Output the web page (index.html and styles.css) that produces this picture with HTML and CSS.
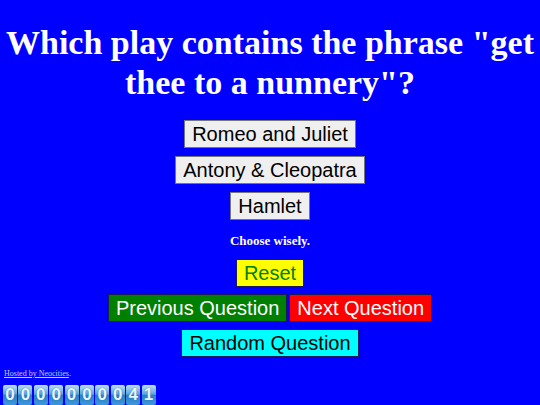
FILE: index.html
```html
<!DOCTYPE html>
<html lang="en">
<head>
  <meta charset="UTF-8">
  <title>Shakespeare Quiz</title>
  <link rel="stylesheet" href="styles.css">
</head>
<body>
<div class="quiz">
  <h1 class="question">Which play contains the phrase "get thee to a nunnery"?</h1>

  <div class="answers">
    <button class="answer">Romeo and Juliet</button>
    <button class="answer">Antony &amp; Cleopatra</button>
    <button class="answer">Hamlet</button>
  </div>

  <p class="feedback">Choose wisely.</p>

  <div class="controls">
    <button class="ctl reset">Reset</button>
    <div class="nav-row">
      <button class="ctl prev">Previous Question</button><button class="ctl next">Next Question</button>
    </div>
    <button class="ctl random">Random Question</button>
  </div>
</div>

<div class="hosted">
  <a href="#">Hosted by Neocities</a>.
  <div class="counter">
    <span class="digit">0</span><span class="digit">0</span><span class="digit">0</span><span class="digit">0</span><span class="digit">0</span><span class="digit">0</span><span class="digit">0</span><span class="digit">0</span><span class="digit">4</span><span class="digit">1</span>
  </div>
</div>
</body>
</html>
```

FILE: styles.css
```css
body {
  margin: 0;
  background-color: blue;
  color: white;
  font-family: "Liberation Serif", "Times New Roman", serif;
  overflow: hidden;
}
.quiz {
  display: flex;
  flex-direction: column;
  align-items: center;
  padding-top: 23px;
}
.question {
  font-size: 34px;
  line-height: 40px;
  text-align: center;
  margin: 0;
}
.answers {
  display: flex;
  flex-direction: column;
  align-items: center;
  gap: 8px;
  margin-top: 17px;
}
button {
  font-family: "Liberation Sans", Arial, sans-serif;
  font-size: 20px;
  line-height: 24px;
  padding: 1px 7px;
  border: 1px solid #1a1a5a;
  border-radius: 0;
  cursor: pointer;
}
.answer {
  background-color: #efefef;
  color: black;
  border-color: #767676;
}
.feedback {
  font-size: 13px;
  font-weight: bold;
  margin: 13px 0 10px;
}
.controls {
  display: flex;
  flex-direction: column;
  align-items: center;
  gap: 7px;
}
.nav-row {
  display: flex;
  gap: 2px;
}
.reset {
  background-color: yellow;
  color: green;
}
.prev {
  background-color: green;
  color: white;
}
.next {
  background-color: red;
  color: white;
}
.random {
  background-color: cyan;
  color: black;
}
.hosted {
  font-size: 8px;
  padding: 12px 4px 0;
}
.hosted a {
  color: #c8c8ff;
}
.counter {
  display: flex;
  margin-top: 7px;
  margin-left: -1px;
}
.digit {
  width: 14px;
  height: 20px;
  margin-right: 1.4px;
  border-radius: 2px;
  background: linear-gradient(#b8e0f8, #5aa8e0 45%, #2a80c8 52%, #3c98dc);
  color: #e8f4ff;
  font-family: "Liberation Sans", Arial, sans-serif;
  font-weight: bold;
  font-size: 17px;
  line-height: 20px;
  text-align: center;
  text-shadow: 0 0 1px #1c5a9c;
}
```
